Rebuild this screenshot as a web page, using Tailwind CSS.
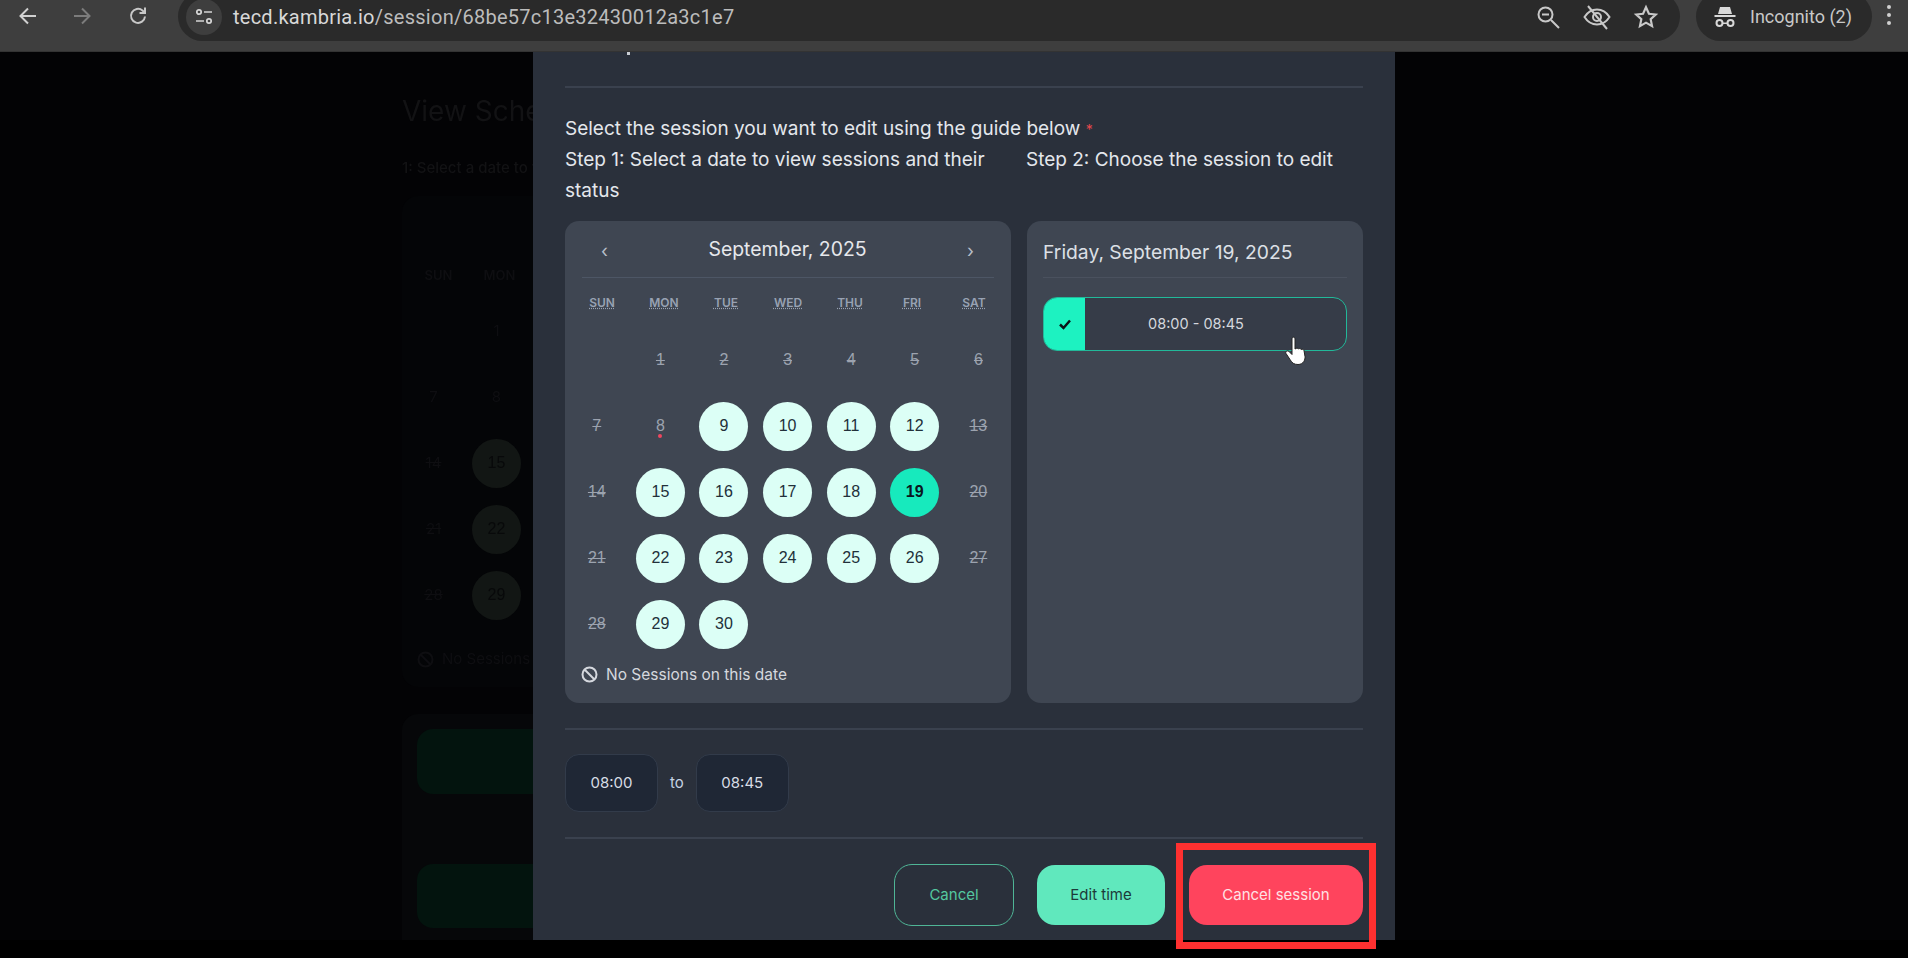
<!DOCTYPE html>
<html><head><meta charset="utf-8"><script src="https://cdn.jsdelivr.net/npm/@tailwindcss/browser@4"></script></head>
<body class="bg-black">
<div class="relative w-[1908px] h-[958px] overflow-hidden bg-[#030305] flex flex-col font-['Inter',sans-serif]">
  <!-- browser toolbar -->
  <header class="relative z-20 h-[52px] shrink-0 bg-[#3e3e3e] border-b border-[#333] flex items-start pl-[16px] text-[#c8c8c8]">
    <div class="flex items-center h-[32px]">
      <svg class="w-[24px] h-[24px]" viewBox="0 0 24 24" fill="none" stroke="#d0d0d0" stroke-width="2"><path d="M20 12H5M12 4.500 4.500 12l7.500 7.500"/></svg>
      <svg class="ml-[30px] w-[24px] h-[24px]" viewBox="0 0 24 24" fill="none" stroke="#7c7c7c" stroke-width="2"><path d="M4 12h15M12 4.500l7.500 7.500-7.500 7.500"/></svg>
      <svg class="ml-[32px] w-[24px] h-[24px]" viewBox="0 0 24 24" fill="none" stroke="#c8c8c8" stroke-width="2"><path d="M19 12.500A7 7 0 1 1 16.500 6.500L19 9M19 3.500V9h-5.500"/></svg>
    </div>
    <div class="ml-[28px] -mt-[8px] w-[1502px] h-[49px] rounded-[25px] bg-[#2a2a2a] flex items-center pl-[8px] pr-[21px]">
      <span class="w-[36px] h-[36px] rounded-full bg-[#3e3e3e] flex items-center justify-center">
        <svg class="w-[20px] h-[20px]" viewBox="0 0 20 20" fill="none" stroke="#d5d5d5" stroke-width="1.700"><circle cx="5" cy="5" r="2.200"/><path d="M10 5h8M2 14h8"/><circle cx="15" cy="14" r="2.200"/></svg>
      </span>
      <span class="ml-[11px] text-[20px] text-[#d8d8d8] font-['Roboto',sans-serif] tracking-[0.25px]">tecd.kambria.io<span class="text-[#bcbcbc]">/session/68be57c13e32430012a3c1e7</span></span>
      <div class="ml-auto flex items-center gap-[22px]">
        <svg class="w-[26px] h-[26px]" viewBox="0 0 26 26" fill="none" stroke="#c8c8c8" stroke-width="2"><circle cx="10.500" cy="10.500" r="7"/><path d="M7 10.500h7M16 16l8 8"/></svg>
        <svg class="w-[28px] h-[28px]" viewBox="0 0 28 28" fill="none" stroke="#c8c8c8" stroke-width="2"><path d="M1.500 14C5 8.500 9 6.500 14 6.500s9 2 12.500 7.500C23 19.500 19 21.500 14 21.500S5 19.500 1.500 14Z"/><circle cx="14" cy="14" r="4"/><path d="M5 3l19 23"/></svg>
        <svg class="w-[26px] h-[26px]" viewBox="0 0 24 24" fill="none" stroke="#c8c8c8" stroke-width="2"><path d="m12 3 2.700 6 6.300.7-4.700 4.300 1.300 6.500L12 17.200 6.400 20.500l1.300-6.500L3 9.700 9.300 9z"/></svg>
      </div>
    </div>
    <div class="ml-[16px] -mt-[8px] w-[176px] h-[49px] rounded-[25px] bg-[#2a2a2a] flex items-center pl-[17px] gap-[13px]">
      <svg class="w-[24px] h-[24px]" viewBox="0 0 24 24" fill="#d8d8d8"><path d="M7 2h10l2 7H5zM1.500 10h21v2h-21z"/><circle cx="6.500" cy="18" r="3" fill="none" stroke="#d8d8d8" stroke-width="2"/><circle cx="17.500" cy="18" r="3" fill="none" stroke="#d8d8d8" stroke-width="2"/><path d="M9.500 17.500h5v1.500h-5z"/></svg>
      <span class="text-[18px] text-[#c8c8c8] font-['Roboto',sans-serif]">Incognito (2)</span>
    </div>
    <div class="ml-[15px] mt-[5px] flex flex-col gap-[4px]">
      <span class="w-[4px] h-[4px] rounded-full bg-[#d0d0d0]"></span><span class="w-[4px] h-[4px] rounded-full bg-[#d0d0d0]"></span><span class="w-[4px] h-[4px] rounded-full bg-[#d0d0d0]"></span>
    </div>
  </header>

  <main class="relative flex-1">
    <!-- dimmed page behind the modal -->
    <div class="ml-[402px] w-[300px] pt-[43px] text-[#121214] blur-[0.6px]">
      <h1 class="text-[28px] leading-[32px]">View Schedule</h1>
      <p class="mt-[31px] text-[15px] leading-[20px] font-medium">1: Select a date to view</p>
      <div class="mt-[18px] h-[491px] rounded-[16px] bg-[#040507] pt-[70px] text-[#0e0e11]">
        <div class="grid grid-cols-[61px_61px] pl-[6px] text-center text-[13px] leading-[18px] font-semibold"><span>SUN</span><span>MON</span></div>
        <div class="mt-[14px] grid grid-cols-[63px_63px] auto-rows-[66px] justify-items-center items-center text-[15px]">
          <span></span><span>1</span>
          <span>7</span><span>8</span>
          <span class="line-through">14</span><span class="w-[49px] h-[49px] rounded-full bg-[#121614] flex items-center justify-center text-[#08090a] font-['Liberation_Sans',sans-serif] text-[16px]">15</span>
          <span class="line-through">21</span><span class="w-[49px] h-[49px] rounded-full bg-[#121614] flex items-center justify-center text-[#08090a] font-['Liberation_Sans',sans-serif] text-[16px]">22</span>
          <span class="line-through">28</span><span class="w-[49px] h-[49px] rounded-full bg-[#121614] flex items-center justify-center text-[#08090a] font-['Liberation_Sans',sans-serif] text-[16px]">29</span>
        </div>
        <div class="mt-[21px] pl-[15px] flex items-center gap-[8px] h-[20px] text-[15px] whitespace-nowrap">
          <svg class="w-[17px] h-[17px]" viewBox="0 0 17 17" fill="none" stroke="#0e0e11" stroke-width="2"><circle cx="8.500" cy="8.500" r="7"/><path d="m3.500 3.500 10 10"/></svg>
          <span>No Sessions on this date</span>
        </div>
      </div>
      <div class="mt-[27px] h-[300px] rounded-t-[16px] bg-[#060709] pl-[15px] pt-[15px]">
        <div class="h-[65px] rounded-l-[16px] bg-[#03140e]"></div>
        <div class="mt-[70px] h-[64px] rounded-l-[16px] bg-[#03140e]"></div>
      </div>
    </div>

    <!-- modal -->
    <section class="absolute left-[533px] top-0 w-[862px] h-[888px] bg-[#2a303b] px-[32px] text-[#e4e7ec] text-[19px] font-['Inter',sans-serif]">
      <i class="absolute left-[94px] top-0 w-[3px] h-[3px] bg-[#c9cdd4]"></i>
      <div class="h-[36px] border-b-2 border-[#3a414e]"></div>
      <div class="mt-[25px] leading-[31px]">
        <p>Select the session you want to edit using the guide below <span class="text-[#e5484d] text-[14px] leading-none">*</span></p>
        <div class="flex">
          <p class="w-[461px] pr-[20px]">Step 1: Select a date to view sessions and their status</p>
          <p>Step 2: Choose the session to edit</p>
        </div>
      </div>
      <div class="mt-[15px] flex gap-[16px] h-[482px]">
        <!-- calendar -->
        <div class="w-[446px] rounded-[14px] bg-[#3f4652] px-[17px] pt-[13px]">
          <div class="flex items-center justify-between h-[32px] pl-[19px] pr-[20px] text-[#b8bec8]">
            <span class="text-[18px]">‹</span><span class="text-[19.400px] text-[#e6e8ec]">September, 2025</span><span class="text-[18px]">›</span>
          </div>
          <div class="mt-[11px] border-t border-[#4d5665]"></div>
          <div class="grid grid-cols-7 mt-[16px] -mx-[11px] text-center text-[12px] leading-[17px] font-semibold text-[#98a2b3] underline decoration-dotted">
            <span>SUN</span><span>MON</span><span>TUE</span><span>WED</span><span>THU</span><span>FRI</span><span>SAT</span>
          </div>
          <div class="mt-[16px] -mx-[17px] grid grid-cols-[repeat(7,63.600px)] auto-rows-[66px] justify-items-center items-center text-[16px] font-['Liberation_Sans',sans-serif] text-[#9ca3af]">
            <span></span>
            <span class="line-through">1</span><span class="line-through">2</span><span class="line-through">3</span><span class="line-through">4</span><span class="line-through">5</span><span class="line-through">6</span>
            <span class="line-through">7</span>
            <span class="relative">8<i class="absolute left-[2px] top-[20px] w-[4px] h-[4px] rounded-full bg-[#f0465f]"></i></span>
            <span class="w-[49px] h-[49px] rounded-full bg-[#dcfff6] text-[#22303a] flex items-center justify-center">9</span>
            <span class="w-[49px] h-[49px] rounded-full bg-[#dcfff6] text-[#22303a] flex items-center justify-center">10</span>
            <span class="w-[49px] h-[49px] rounded-full bg-[#dcfff6] text-[#22303a] flex items-center justify-center">11</span>
            <span class="w-[49px] h-[49px] rounded-full bg-[#dcfff6] text-[#22303a] flex items-center justify-center">12</span>
            <span class="line-through">13</span>
            <span class="line-through">14</span>
            <span class="w-[49px] h-[49px] rounded-full bg-[#dcfff6] text-[#22303a] flex items-center justify-center">15</span>
            <span class="w-[49px] h-[49px] rounded-full bg-[#dcfff6] text-[#22303a] flex items-center justify-center">16</span>
            <span class="w-[49px] h-[49px] rounded-full bg-[#dcfff6] text-[#22303a] flex items-center justify-center">17</span>
            <span class="w-[49px] h-[49px] rounded-full bg-[#dcfff6] text-[#22303a] flex items-center justify-center">18</span>
            <span class="w-[49px] h-[49px] rounded-full bg-[#17eabd] text-[#0a1620] font-bold flex items-center justify-center">19</span>
            <span class="line-through">20</span>
            <span class="line-through">21</span>
            <span class="w-[49px] h-[49px] rounded-full bg-[#dcfff6] text-[#22303a] flex items-center justify-center">22</span>
            <span class="w-[49px] h-[49px] rounded-full bg-[#dcfff6] text-[#22303a] flex items-center justify-center">23</span>
            <span class="w-[49px] h-[49px] rounded-full bg-[#dcfff6] text-[#22303a] flex items-center justify-center">24</span>
            <span class="w-[49px] h-[49px] rounded-full bg-[#dcfff6] text-[#22303a] flex items-center justify-center">25</span>
            <span class="w-[49px] h-[49px] rounded-full bg-[#dcfff6] text-[#22303a] flex items-center justify-center">26</span>
            <span class="line-through">27</span>
            <span class="line-through">28</span>
            <span class="w-[49px] h-[49px] rounded-full bg-[#dcfff6] text-[#22303a] flex items-center justify-center">29</span>
            <span class="w-[49px] h-[49px] rounded-full bg-[#dcfff6] text-[#22303a] flex items-center justify-center">30</span>
          </div>
          <div class="mt-[6px] -ml-[1px] flex items-center gap-[8px] text-[15.500px] text-[#d5d8de]">
            <svg class="w-[17px] h-[17px]" viewBox="0 0 17 17" fill="none" stroke="#d5d8de" stroke-width="2"><circle cx="8.500" cy="8.500" r="7"/><path d="m3.500 3.500 10 10"/></svg>
            <span>No Sessions on this date</span>
          </div>
        </div>
        <!-- sessions -->
        <div class="flex-1 rounded-[14px] bg-[#3f4652] px-[16px] pt-[16px]">
          <p class="text-[19.300px] leading-[30px] text-[#dde0e6] pb-[10px] border-b border-[#4a515e]">Friday, September 19, 2025</p>
          <div class="mt-[19px] h-[54px] rounded-[14px] border border-[#22b99a] bg-[#363c48] overflow-hidden flex items-center">
            <span class="w-[41px] h-full bg-[#1df2c1] flex items-center justify-center shrink-0">
              <svg class="w-[14px] h-[14px]" viewBox="0 0 14 14" fill="none" stroke="#0b1418" stroke-width="2.500"><path d="m2 7.500 3.500 3.500L12 3.500"/></svg>
            </span>
            <span class="w-[222px] text-center text-[14.500px] text-[#d5d8de]">08:00 - 08:45</span>
          </div>
        </div>
      </div>
      <div class="mt-[25px] border-t-2 border-[#3a414e]"></div>
      <div class="mt-[24px] flex items-center gap-[12px]">
        <span class="w-[93px] h-[58px] pt-[1px] rounded-[14px] bg-[#1f2735] border border-[#323b4a] flex items-center justify-center text-[15px] text-[#d8dde5]">08:00</span>
        <span class="text-[15px] text-[#c5d3e4]">to</span>
        <span class="w-[93px] h-[58px] pt-[1px] rounded-[14px] bg-[#1f2735] border border-[#323b4a] flex items-center justify-center text-[15px] text-[#d8dde5]">08:45</span>
      </div>
      <div class="mt-[25px] border-t-2 border-[#3a414e]"></div>
      <div class="mt-[25px] flex justify-end items-center text-[15px]">
        <button class="w-[120px] h-[62px] rounded-[18px] border border-[#4fb596] text-[#54c79f]">Cancel</button>
        <button class="ml-[23px] w-[128px] h-[60px] rounded-[18px] bg-[#60e8bd] text-[#1c3a3a]">Edit time</button>
        <button class="ml-[24px] w-[174px] h-[60px] rounded-[18px] bg-[#ff445d] text-[#ffe1e4]">Cancel session</button>
      </div>
    </section>

    <!-- hand cursor -->
    <svg class="absolute left-[1284px] top-[284px] w-[26px] h-[32px]" viewBox="0 0 26 32"><path d="M8 3c0-2.500 3-2.500 3 0v10l1-.5c1-.5 2-.3 2.500.5 1-.8 2.200-.5 2.700.5 1-.6 2.300-.2 2.800 1l1 6c.4 3-1.500 8-7 8-4 0-6-1.500-8-5l-4-6c-1-2 1.500-3.500 3-2l3 3z" fill="#fff" stroke="#222" stroke-width="1"/></svg>
  </main>
  <!-- letterbox strip under the recording -->
  <div class="absolute left-0 right-0 bottom-0 h-[18px] bg-black"></div>
  <!-- red highlight box -->
  <div class="absolute left-[1176px] top-[843px] w-[200px] h-[106px] border-[7px] border-[#ff3030]"></div>
</div>
</body></html>
